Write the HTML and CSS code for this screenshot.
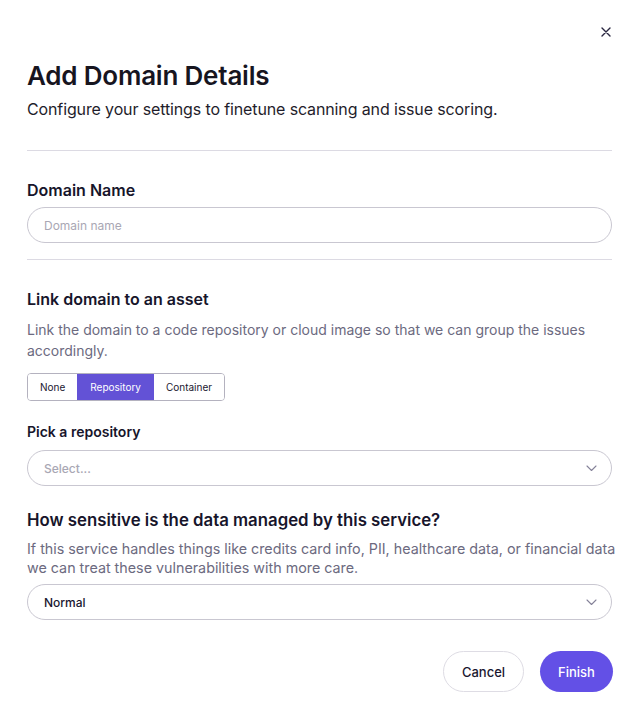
FILE: index.html
```html
<!DOCTYPE html>
<html lang="en">
<head>
<meta charset="utf-8">
<title>Add Domain Details</title>
<link rel="stylesheet" href="styles.css">
</head>
<body>
<div class="dialog">
  <button class="close" aria-label="Close">
    <svg width="10" height="10" viewBox="0 0 10 10"><path d="M1 1L9 9M9 1L1 9" stroke="#2a2740" stroke-width="1.4" stroke-linecap="round"/></svg>
  </button>
  <h1 class="title">Add Domain Details</h1>
  <p class="subtitle">Configure your settings to finetune scanning and issue scoring.</p>
  <hr class="divider">

  <section class="field">
    <label class="label">Domain Name</label>
    <input class="input" type="text" placeholder="Domain name">
  </section>
  <hr class="divider">

  <section class="group">
    <h2 class="label">Link domain to an asset</h2>
    <p class="help">Link the domain to a code repository or cloud image so that we can group the issues accordingly.</p>
    <div class="segmented">
      <button class="seg">None</button>
      <button class="seg active">Repository</button>
      <button class="seg">Container</button>
    </div>
    <label class="label small">Pick a repository</label>
    <div class="select placeholder">
      <span>Select...</span>
      <svg width="11" height="7" viewBox="0 0 11 7"><path d="M1 1L5.5 5.5L10 1" fill="none" stroke="#858299" stroke-width="1.1" stroke-linecap="round" stroke-linejoin="round"/></svg>
    </div>
  </section>

  <section class="group sensitive">
    <h2 class="label">How sensitive is the data managed by this service?</h2>
    <p class="help">If this service handles things like credits card info, PII, healthcare data, or financial data we can treat these vulnerabilities with more care.</p>
    <div class="select">
      <span>Normal</span>
      <svg width="11" height="7" viewBox="0 0 11 7"><path d="M1 1L5.5 5.5L10 1" fill="none" stroke="#858299" stroke-width="1.1" stroke-linecap="round" stroke-linejoin="round"/></svg>
    </div>
  </section>

  <div class="actions">
    <button class="btn secondary">Cancel</button>
    <button class="btn primary">Finish</button>
  </div>
</div>
</body>
</html>
```

FILE: styles.css
```css
* { box-sizing: border-box; }

html, body {
  margin: 0;
  background: #ffffff;
}

body {
  font-family: Inter, "Noto Sans", sans-serif;
  color: #1a1730;
}

.dialog {
  position: relative;
  width: 638px;
  height: 714px;
  padding: 60px 26px 0 27px;
}

.close {
  position: absolute;
  top: 27px;
  right: 27px;
  width: 10px;
  height: 10px;
  padding: 0;
  border: 0;
  background: none;
  display: flex;
}

.title {
  margin: 0;
  font-size: 26px;
  line-height: 32px;
  font-weight: 600;
  letter-spacing: -0.2px;
  color: #17151f;
}

.subtitle {
  margin: 5px 0 0;
  font-size: 16px;
  line-height: 24px;
  letter-spacing: -0.13px;
  color: #1f1d2b;
}

.divider {
  border: 0;
  border-top: 1px solid #dcdae3;
  margin: 29px 0 0;
}

.field {
  padding-top: 28px;
  padding-bottom: 16px;
}

.label {
  display: block;
  margin: 0;
  font-size: 16px;
  line-height: 22px;
  font-weight: 600;
  color: #17152b;
}

.label.small {
  font-size: 14px;
  line-height: 20px;
  margin-top: 21px;
}

.input {
  display: block;
  width: 100%;
  height: 36px;
  margin-top: 6px;
  padding: 0 16px;
  border: 1px solid #c9c7d1;
  border-radius: 18px;
  font-family: inherit;
  font-size: 12px;
  color: #1a1730;
  outline: none;
}

.input::placeholder { color: #a9a7b4; }

.field + .divider { margin-top: 0; }

.group {
  padding-top: 28px;
}

.help {
  margin: 9px 0 0;
  font-size: 14px;
  line-height: 21px;
  color: #6c6a80;
}

.segmented {
  display: inline-flex;
  margin-top: 12px;
  border: 1px solid #b4b2bf;
  border-radius: 4px;
  overflow: hidden;
}

.seg {
  height: 26px;
  padding: 0 12px;
  border: 0;
  border-left: 1px solid #b4b2bf;
  background: #fff;
  font-family: inherit;
  font-size: 10px;
  color: #1a1730;
}

.seg:first-child { border-left: 0; }

.seg.active {
  background: #6352d6;
  border-left-color: #6352d6;
  color: #fff;
}

.seg.active + .seg { border-left-color: #6352d6; }

.select {
  display: flex;
  align-items: center;
  justify-content: space-between;
  height: 36px;
  margin-top: 8px;
  padding: 0 14px 0 16px;
  border: 1px solid #c9c7d1;
  border-radius: 18px;
  font-size: 12px;
  font-weight: 500;
  color: #1a1730;
}

.select.placeholder span { color: #a9a7b4; }

.sensitive { padding-top: 23px; }

.sensitive .label {
  font-size: 16.8px;
}

.sensitive .help {
  margin-top: 8px;
  margin-right: -10px;
  font-size: 14.3px;
  line-height: 19px;
}

.sensitive .select { margin-top: 7px; }

.actions {
  display: flex;
  justify-content: flex-end;
  gap: 16px;
  margin-top: 31px;
  margin-right: -1px;
}

.btn {
  height: 41px;
  border-radius: 21px;
  font-family: inherit;
  font-size: 13px;
  font-weight: 500;
}

.btn.secondary {
  width: 81px;
  background: #fff;
  border: 1px solid #dedce4;
  color: #1a1730;
}

.btn.primary {
  width: 73px;
  background: #6350e6;
  border: 0;
  color: #fff;
}
```
